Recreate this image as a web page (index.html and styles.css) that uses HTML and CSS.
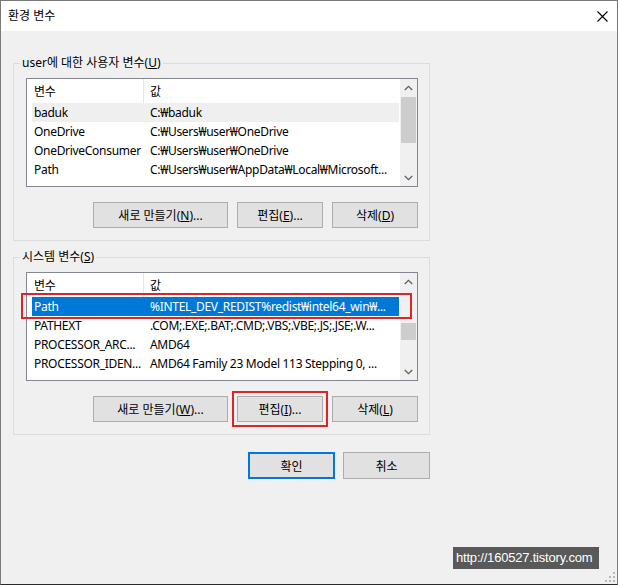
FILE: index.html
```html
<!DOCTYPE html>
<html lang="ko">
<head>
    <meta charset="UTF-8">
    <title>환경 변수</title>
    <link rel="stylesheet" href="styles.css">
</head>
<body>
    <div class="window">
        <div class="titlebar">
            <span class="title">환경 변수</span>
            <svg class="close" width="11" height="11" viewBox="0 0 11 11">
                <path d="M0.5 0.5 L10.5 10.5 M10.5 0.5 L0.5 10.5" stroke="#000" stroke-width="1.1" fill="none"/>
            </svg>
        </div>

        <div class="content">
            <fieldset class="group">
                <legend>user에 대한 사용자 변수(<u>U</u>)</legend>
                <div class="list">
                    <div class="list-body">
                        <div class="list-head">
                            <span class="col-name">변수</span>
                            <span class="col-value">값</span>
                        </div>
                        <div class="list-row hover">
                            <span class="col-name">baduk</span>
                            <span class="col-value">C:₩baduk</span>
                        </div>
                        <div class="list-row">
                            <span class="col-name">OneDrive</span>
                            <span class="col-value">C:₩Users₩user₩OneDrive</span>
                        </div>
                        <div class="list-row">
                            <span class="col-name">OneDriveConsumer</span>
                            <span class="col-value">C:₩Users₩user₩OneDrive</span>
                        </div>
                        <div class="list-row">
                            <span class="col-name">Path</span>
                            <span class="col-value">C:₩Users₩user₩AppData₩Local₩Microsoft...</span>
                        </div>
                    </div>
                    <div class="scrollbar">
                        <div class="arrow">
                            <svg width="9" height="6" viewBox="0 0 9 6"><polyline points="0.8,5 4.5,1.3 8.2,5" fill="none" stroke="#606060" stroke-width="1.3"/></svg>
                        </div>
                        <div class="track"><div class="thumb" style="margin-top:1px;height:46px"></div></div>
                        <div class="arrow">
                            <svg width="9" height="6" viewBox="0 0 9 6"><polyline points="0.8,1 4.5,4.7 8.2,1" fill="none" stroke="#606060" stroke-width="1.3"/></svg>
                        </div>
                    </div>
                </div>
                <div class="buttons">
                    <button class="btn wide">새로 만들기(<u>N</u>)...</button>
                    <button class="btn">편집(<u>E</u>)...</button>
                    <button class="btn">삭제(<u>D</u>)</button>
                </div>
            </fieldset>

            <fieldset class="group system">
                <legend>시스템 변수(<u>S</u>)</legend>
                <div class="list">
                    <div class="list-body">
                        <div class="list-head">
                            <span class="col-name">변수</span>
                            <span class="col-value">값</span>
                        </div>
                        <div class="list-row selected">
                            <span class="col-name">Path</span>
                            <span class="col-value">%INTEL_DEV_REDIST%redist₩intel64_win₩...</span>
                        </div>
                        <div class="list-row">
                            <span class="col-name">PATHEXT</span>
                            <span class="col-value">.COM;.EXE;.BAT;.CMD;.VBS;.VBE;.JS;.JSE;.W...</span>
                        </div>
                        <div class="list-row">
                            <span class="col-name">PROCESSOR_ARC...</span>
                            <span class="col-value">AMD64</span>
                        </div>
                        <div class="list-row">
                            <span class="col-name">PROCESSOR_IDEN...</span>
                            <span class="col-value">AMD64 Family 23 Model 113 Stepping 0, ...</span>
                        </div>
                    </div>
                    <div class="scrollbar">
                        <div class="arrow">
                            <svg width="9" height="6" viewBox="0 0 9 6"><polyline points="0.8,5 4.5,1.3 8.2,5" fill="none" stroke="#606060" stroke-width="1.3"/></svg>
                        </div>
                        <div class="track"><div class="thumb" style="margin-top:33px;height:17px"></div></div>
                        <div class="arrow">
                            <svg width="9" height="6" viewBox="0 0 9 6"><polyline points="0.8,1 4.5,4.7 8.2,1" fill="none" stroke="#606060" stroke-width="1.3"/></svg>
                        </div>
                    </div>
                </div>
                <div class="buttons">
                    <button class="btn wide">새로 만들기(<u>W</u>)...</button>
                    <button class="btn marked">편집(<u>I</u>)...</button>
                    <button class="btn">삭제(<u>L</u>)</button>
                </div>
            </fieldset>

            <div class="dialog-buttons">
                <button class="btn dialog default">확인</button>
                <button class="btn dialog">취소</button>
            </div>
        </div>

        <div class="watermark">http://160527.tistory.com</div>
        <svg class="grip" width="10" height="10" viewBox="0 0 10 10" fill="#b8b8b8">
            <rect x="8" y="0" width="2" height="2"/>
            <rect x="4" y="4" width="2" height="2"/>
            <rect x="8" y="4" width="2" height="2"/>
            <rect x="0" y="8" width="2" height="2"/>
            <rect x="4" y="8" width="2" height="2"/>
            <rect x="8" y="8" width="2" height="2"/>
        </svg>
    </div>
</body>
</html>
```

FILE: styles.css
```css
body {
    margin: 0;
    background-color: #f0f0f0;
    font-family: "Noto Sans", "Noto Sans CJK KR", sans-serif;
    font-size: 12px;
    color: #000;
}

.window {
    position: relative;
    width: 618px;
    height: 585px;
    box-sizing: border-box;
    border: 1px solid #7a7a7a;
    border-bottom-color: #2b2b2b;
    background-color: #f0f0f0;
    display: flex;
    flex-direction: column;
}

.titlebar {
    height: 30px;
    flex-shrink: 0;
    background-color: #fff;
    display: flex;
    align-items: center;
    justify-content: space-between;
    padding: 0 9px 0 7px;
}

.title {
    line-height: 16px;
}

.content {
    padding: 24px 0 0 12px;
}

.group {
    width: 417px;
    min-width: 0;
    box-sizing: border-box;
    margin: 0;
    padding: 7px 11px 12px 12px;
    border: 1px solid #dcdcdc;
}

.group legend {
    padding: 0 2px;
    margin-left: -6px;
    line-height: 16px;
}

.group.system {
    margin-top: 8px;
}

.list {
    display: flex;
    width: 392px;
    height: 109px;
    box-sizing: border-box;
    border: 1px solid #828790;
    background-color: #fff;
    letter-spacing: -0.3px;
}

.list-body {
    flex: 1;
    min-width: 0;
}

.list-head {
    display: flex;
    height: 24px;
}

.list-head .col-name {
    width: 117px;
    padding-left: 7px;
    border-right: 1px solid #e5e5e5;
}

.list-head span {
    display: flex;
    align-items: center;
    box-sizing: border-box;
}

.list-row {
    display: flex;
    align-items: center;
    height: 19px;
    margin: 0 1px 0 5px;
}

.list-row .col-name {
    width: 111px;
    flex-shrink: 0;
    padding-left: 2px;
    box-sizing: border-box;
    white-space: nowrap;
}

.col-value {
    flex: 1;
    padding-left: 7px;
    white-space: nowrap;
    overflow: hidden;
}

.list-head .col-value {
    padding-left: 6px;
}

.list-row.hover {
    background-color: #efefef;
}

.list-row.selected {
    position: relative;
    background-color: #0078d7;
    color: #fff;
}

.list-row.selected::after {
    content: "";
    position: absolute;
    left: -11px;
    right: -13px;
    top: -4px;
    bottom: -3px;
    border: 2px solid #d9262b;
}

.scrollbar {
    width: 17px;
    flex-shrink: 0;
    display: flex;
    flex-direction: column;
    background-color: #f0f0f0;
}

.arrow {
    height: 17px;
    display: flex;
    align-items: center;
    justify-content: center;
}

.track {
    flex: 1;
}

.thumb {
    margin: 0 1px;
    background-color: #cdcdcd;
}

.buttons {
    display: flex;
    justify-content: flex-end;
    gap: 9px;
    width: 392px;
    margin-top: 15px;
}

.btn {
    width: 86px;
    height: 26px;
    padding: 0;
    box-sizing: border-box;
    border: 1px solid #adadad;
    background-color: #e1e1e1;
    font: inherit;
    color: #000;
}

.btn.wide {
    width: 135px;
}

.btn.marked {
    outline: 2px solid #d9262b;
    outline-offset: 3px;
}

.dialog-buttons {
    display: flex;
    justify-content: flex-end;
    gap: 8px;
    width: 417px;
    margin-top: 17px;
}

.btn.dialog {
    width: 87px;
    height: 27px;
}

.btn.default {
    border: 2px solid #0078d7;
}

.watermark {
    position: absolute;
    left: 452px;
    top: 546px;
    width: 146px;
    height: 22px;
    box-sizing: border-box;
    padding-left: 3px;
    background-color: #595959;
    color: #fff;
    font-family: "Liberation Sans", sans-serif;
    font-size: 13px;
    letter-spacing: -0.2px;
    line-height: 22px;
    white-space: nowrap;
}

.grip {
    position: absolute;
    right: 2px;
    bottom: 2px;
}
```
